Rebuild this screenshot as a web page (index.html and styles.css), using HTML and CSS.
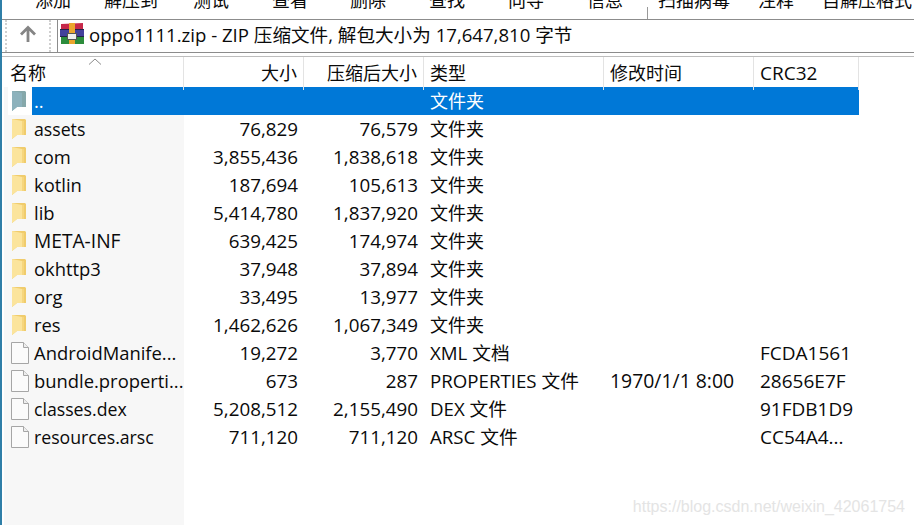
FILE: index.html

```html
<!DOCTYPE html>
<html lang="zh-CN">
<head>
    <meta charset="UTF-8">
    <meta name="viewport" content="width=device-width, initial-scale=1.0">
    <title>oppo1111.zip</title>
    <link rel="stylesheet" href="styles.css">
</head>
<body>
    <svg class="defs" width="0" height="0">
        <symbol id="folder" viewBox="0 0 14 20">
            <path d="M0 0h13l1 1v15H5l-5 4z" fill="#f0cc6c"/>
            <path d="M0 0l10 2v14H5l-5 4z" fill="#fbe49c"/>
            <path d="M10 2l2 0v14h-2z" fill="#f6d67e"/>
        </symbol>
        <symbol id="parent" viewBox="0 0 14 20">
            <path d="M0 0h13l1 1v15H5l-5 4z" fill="#86a8aa"/>
            <path d="M0 0l10 2v14H5l-5 4z" fill="#8db2bc"/>
        </symbol>
        <symbol id="file" viewBox="0 0 18 22">
            <path d="M.5.5h12l5 5v16H.5z" fill="#fbfbfb" stroke="#a6a6a6"/>
            <path d="M12.500.5v5h5" fill="#eee" stroke="#a6a6a6"/>
        </symbol>
    </svg>

    <div class="toolbar">
        <span class="tool t1">添加</span>
        <span class="tool t2">解压到</span>
        <span class="tool t3">测试</span>
        <span class="tool t4">查看</span>
        <span class="tool t5">删除</span>
        <span class="tool t6">查找</span>
        <span class="tool t7">向导</span>
        <span class="tool t8">信息</span>
        <span class="tool-sep"></span>
        <span class="tool t9">扫描病毒</span>
        <span class="tool t10">注释</span>
        <span class="tool t11">自解压格式</span>
    </div>

    <div class="address">
        <div class="up-box">
            <svg width="18" height="18" viewBox="0 0 18 18"><path d="M9 17V3M2 9.500 9 2.500l7 7" fill="none" stroke="#858585" stroke-width="2.800"/></svg>
        </div>
        <div class="path-box">
            <svg class="rar" width="24" height="21" viewBox="0 0 24 21">
                <path d="M1 1 23 0v7H1z" fill="#c6284a"/>
                <path d="M0 7h24v7H0z" fill="#43409c"/>
                <path d="M1 14h23v7H1z" fill="#2c8c3c"/>
                <path d="M0 6.500h24M0 13.500h24" stroke="#23234a" stroke-width="1"/>
                <rect x="9" y="0" width="6" height="21" fill="#eba52e"/>
                <rect x="7.500" y="10.500" width="9" height="6" fill="#efefef" stroke="#555"/>
            </svg>
            <span>oppo1111.zip - ZIP 压缩文件, 解包大小为 17,647,810 字节</span>
        </div>
    </div>

    <div class="list">
        <div class="row head">
            <div class="cell name">名称</div>
            <div class="cell num">大小</div>
            <div class="cell num">压缩后大小</div>
            <div class="cell">类型</div>
            <div class="cell">修改时间</div>
            <div class="cell crc">CRC32</div>
            <svg class="sort" width="14" height="7" viewBox="0 0 14 7"><path d="M1 6.500 7 1l6 5.500" fill="none" stroke="#8a8a8a"/></svg>
        </div>

        <div class="row selected">
            <div class="cell name"><svg class="ico"><use href="#parent"/></svg><span class="label">..</span></div>
            <div class="cell num"></div>
            <div class="cell num"></div>
            <div class="cell">文件夹</div>
            <div class="cell"></div>
            <div class="cell"></div>
        </div>
        <div class="row">
            <div class="cell name"><svg class="ico"><use href="#folder"/></svg><span class="label tight">assets</span></div>
            <div class="cell num">76,829</div>
            <div class="cell num">76,579</div>
            <div class="cell">文件夹</div>
            <div class="cell"></div>
            <div class="cell"></div>
        </div>
        <div class="row">
            <div class="cell name"><svg class="ico"><use href="#folder"/></svg><span class="label">com</span></div>
            <div class="cell num">3,855,436</div>
            <div class="cell num">1,838,618</div>
            <div class="cell">文件夹</div>
            <div class="cell"></div>
            <div class="cell"></div>
        </div>
        <div class="row">
            <div class="cell name"><svg class="ico"><use href="#folder"/></svg><span class="label">kotlin</span></div>
            <div class="cell num">187,694</div>
            <div class="cell num">105,613</div>
            <div class="cell">文件夹</div>
            <div class="cell"></div>
            <div class="cell"></div>
        </div>
        <div class="row">
            <div class="cell name"><svg class="ico"><use href="#folder"/></svg><span class="label">lib</span></div>
            <div class="cell num">5,414,780</div>
            <div class="cell num">1,837,920</div>
            <div class="cell">文件夹</div>
            <div class="cell"></div>
            <div class="cell"></div>
        </div>
        <div class="row">
            <div class="cell name"><svg class="ico"><use href="#folder"/></svg><span class="label caps">META-INF</span></div>
            <div class="cell num">639,425</div>
            <div class="cell num">174,974</div>
            <div class="cell">文件夹</div>
            <div class="cell"></div>
            <div class="cell"></div>
        </div>
        <div class="row">
            <div class="cell name"><svg class="ico"><use href="#folder"/></svg><span class="label">okhttp3</span></div>
            <div class="cell num">37,948</div>
            <div class="cell num">37,894</div>
            <div class="cell">文件夹</div>
            <div class="cell"></div>
            <div class="cell"></div>
        </div>
        <div class="row">
            <div class="cell name"><svg class="ico"><use href="#folder"/></svg><span class="label">org</span></div>
            <div class="cell num">33,495</div>
            <div class="cell num">13,977</div>
            <div class="cell">文件夹</div>
            <div class="cell"></div>
            <div class="cell"></div>
        </div>
        <div class="row">
            <div class="cell name"><svg class="ico"><use href="#folder"/></svg><span class="label">res</span></div>
            <div class="cell num">1,462,626</div>
            <div class="cell num">1,067,349</div>
            <div class="cell">文件夹</div>
            <div class="cell"></div>
            <div class="cell"></div>
        </div>
        <div class="row file">
            <div class="cell name"><svg class="ico"><use href="#file"/></svg><span class="label">AndroidManife...</span></div>
            <div class="cell num">19,272</div>
            <div class="cell num">3,770</div>
            <div class="cell mixed">XML 文档</div>
            <div class="cell"></div>
            <div class="cell crc">FCDA1561</div>
        </div>
        <div class="row file">
            <div class="cell name"><svg class="ico"><use href="#file"/></svg><span class="label">bundle.properti...</span></div>
            <div class="cell num">673</div>
            <div class="cell num">287</div>
            <div class="cell mixed">PROPERTIES 文件</div>
            <div class="cell date">1970/1/1 8:00</div>
            <div class="cell crc">28656E7F</div>
        </div>
        <div class="row file">
            <div class="cell name"><svg class="ico"><use href="#file"/></svg><span class="label tight">classes.dex</span></div>
            <div class="cell num">5,208,512</div>
            <div class="cell num">2,155,490</div>
            <div class="cell mixed">DEX 文件</div>
            <div class="cell"></div>
            <div class="cell crc">91FDB1D9</div>
        </div>
        <div class="row file">
            <div class="cell name"><svg class="ico"><use href="#file"/></svg><span class="label tight">resources.arsc</span></div>
            <div class="cell num">711,120</div>
            <div class="cell num">711,120</div>
            <div class="cell mixed">ARSC 文件</div>
            <div class="cell"></div>
            <div class="cell crc">CC54A4...</div>
        </div>
    </div>

    <div class="watermark">https://blog.csdn.net/weixin_42061754</div>
</body>
</html>
```

FILE: styles.css

```css
html, body {
    margin: 0;
    height: 525px;
    overflow: hidden;
}
body {
    position: relative;
    background-color: #fff;
    color: #0a0a0a;
    font-family: "Open Sans", "Noto Sans CJK SC", sans-serif;
    font-size: 18px;
    border-left: 2px solid #2f7fa8;
    box-sizing: border-box;
}
.defs {
    position: absolute;
}
.toolbar {
    display: flex;
    align-items: flex-end;
    height: 19px;
    overflow: hidden;
    border-bottom: 1px solid #8c8c8c;
    font-family: "Noto Sans CJK SC", sans-serif;
    font-size: 18px;
    line-height: 39px;
}
.tool {
    flex: none;
    white-space: nowrap;
}
.t1 { margin-left: 33px; }
.t2 { margin-left: 33px; }
.t3 { margin-left: 35px; }
.t4 { margin-left: 43px; }
.t5 { margin-left: 42px; }
.t6 { margin-left: 43px; }
.t7 { margin-left: 43px; }
.t8 { margin-left: 43px; }
.t9 { margin-left: 10px; }
.t10 { margin-left: 28px; }
.t11 { margin-left: 28px; }
.tool-sep {
    flex: none;
    width: 1px;
    height: 12px;
    margin-left: 24px;
    background-color: #999;
}
.address {
    display: flex;
    height: 32px;
    border-bottom: 1px solid #8c8c8c;
}
.up-box {
    display: flex;
    align-items: center;
    justify-content: center;
    width: 46px;
    margin-left: 3px;
    padding-bottom: 4px;
    border-left: 2px dotted #cfcfcf;
    border-right: 2px dotted #cfcfcf;
    box-sizing: border-box;
}
.path-box {
    display: flex;
    flex: 1;
    align-items: center;
    margin-left: 6px;
    padding-bottom: 6px;
    border-left: 1px solid #8c8c8c;
    font-size: 18.600px;
}
.rar {
    flex: none;
    margin: 0 5px 0 2px;
}
.path-box span {
    white-space: nowrap;
}
.list {
    position: relative;
    height: 469px;
    margin-top: 3px;
    padding-left: 2px;
    border-top: 1px solid #bdbdbd;
    background: linear-gradient(#f7f7f7, #f7f7f7) no-repeat 2px 0 / 180px 100%;
}
.row {
    display: grid;
    grid-template-columns: 180px 120px 120px 180px 150px 105px;
    width: 855px;
    height: 28px;
    line-height: 28px;
    font-size: 18px;
}
.row.head {
    position: relative;
    width: 912px;
    height: 30px;
    margin-left: -2px;
    padding-left: 2px;
    box-sizing: border-box;
    line-height: 33px;
    background-color: #fff;
}
.row.head .cell {
    border-right: 1px solid #e3e3e3;
}
.row.head .cell.name {
    padding-left: 6px;
}
.cell {
    padding: 0 6px;
    white-space: nowrap;
    overflow: hidden;
    box-sizing: border-box;
}
.cell.num {
    font-size: 18.800px;
    text-align: right;
}
.head .cell.num {
    font-size: 18px;
}
.cell.crc {
    font-size: 19px;
}
.cell.date {
    font-size: 19.400px;
}
.cell.mixed {
    font-size: 18.700px;
}
.cell.name {
    display: flex;
    align-items: center;
    padding: 0 0 0 8px;
    font-size: 18.400px;
    overflow: visible;
}
.head .cell.name {
    font-size: 18px;
}
.ico {
    flex: none;
    width: 14px;
    height: 20px;
}
.label {
    margin-left: 8px;
}
.label.tight {
    font-size: 17.700px;
}
.label.caps {
    font-size: 19.200px;
}
.file .ico {
    width: 18px;
    height: 22px;
    margin-left: -1px;
}
.file .label {
    margin-left: 5px;
}
.selected {
    background:
        linear-gradient(#0078d7, #0078d7) no-repeat 28px 0 / 827px 100%,
        linear-gradient(#fff, #fff) no-repeat 4px 0 / 24px 100%;
    color: #fff;
}
.sort {
    position: absolute;
    left: 86px;
    top: 1px;
}
.watermark {
    position: absolute;
    right: 9px;
    bottom: 9px;
    color: #e4e4e4;
    font-family: "Liberation Sans", sans-serif;
    font-size: 16px;
}
```
